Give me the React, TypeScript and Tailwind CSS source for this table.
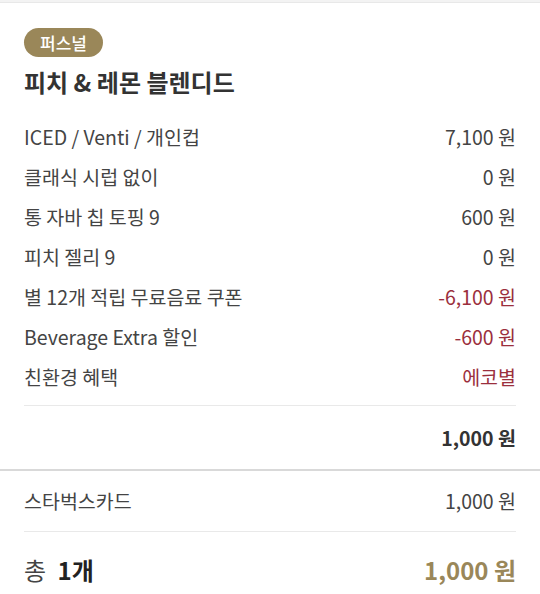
import React from "react";

const rows: { label: string; value: string; red?: boolean }[] = [
  { label: "ICED / Venti / 개인컵", value: "7,100 원" },
  { label: "클래식 시럽 없이", value: "0 원" },
  { label: "통 자바 칩 토핑 9", value: "600 원" },
  { label: "피치 젤리 9", value: "0 원" },
  { label: "별 12개 적립 무료음료 쿠폰", value: "-6,100 원", red: true },
  { label: "Beverage Extra 할인", value: "-600 원", red: true },
  { label: "친환경 혜택", value: "에코별", red: true },
];

export default function App() {
  return (
    <div
      className="w-[540px] h-[594px] overflow-hidden bg-white text-[#333333]"
      style={{ fontFamily: '"Noto Sans CJK KR", "Noto Sans", sans-serif' }}
    >
      <div className="h-[3px] bg-[#f3f3f3] border-b border-[#e8e8e8]" />
      <div className="px-6">
        <div className="pt-[25px] flex">
          <span className="h-[29px] px-[16px] rounded-full bg-[#9a8759] text-white text-[17px] leading-[29px] font-medium">
            퍼스널
          </span>
        </div>
        <div className="mt-[10px] h-[30px] leading-[30px] text-[24px] font-bold text-[#333333]">
          피치 &amp; 레몬 블렌디드
        </div>
        <div className="mt-[20px]">
          {rows.map((r) => (
            <div key={r.label} className="h-10 flex items-center justify-between text-[19.5px]">
              <span className="text-[#444444]">{r.label}</span>
              <span className={r.red ? "text-[#9b2f3d]" : "text-[#444444]"}>{r.value}</span>
            </div>
          ))}
        </div>
        <div className="mt-2 h-px bg-[#e9e9e9]" />
        <div className="h-[63px] flex items-center justify-end text-[19.5px] font-bold text-[#333333]">
          1,000 원
        </div>
      </div>
      <div className="h-[2px] bg-[#d9d9d9]" />
      <div className="px-6">
        <div className="h-[60px] flex items-center justify-between text-[19.5px] text-[#444444]">
          <span>스타벅스카드</span>
          <span>1,000 원</span>
        </div>
        <div className="h-px bg-[#e9e9e9]" />
        <div className="h-[76px] flex items-center justify-between">
          <span className="text-[24px] text-[#444444]">
            총 <span className="font-bold ml-[6px] text-[#222222]">1개</span>
          </span>
          <span className="text-[24px] font-bold text-[#9a8759]">1,000 원</span>
        </div>
      </div>
    </div>
  );
}
